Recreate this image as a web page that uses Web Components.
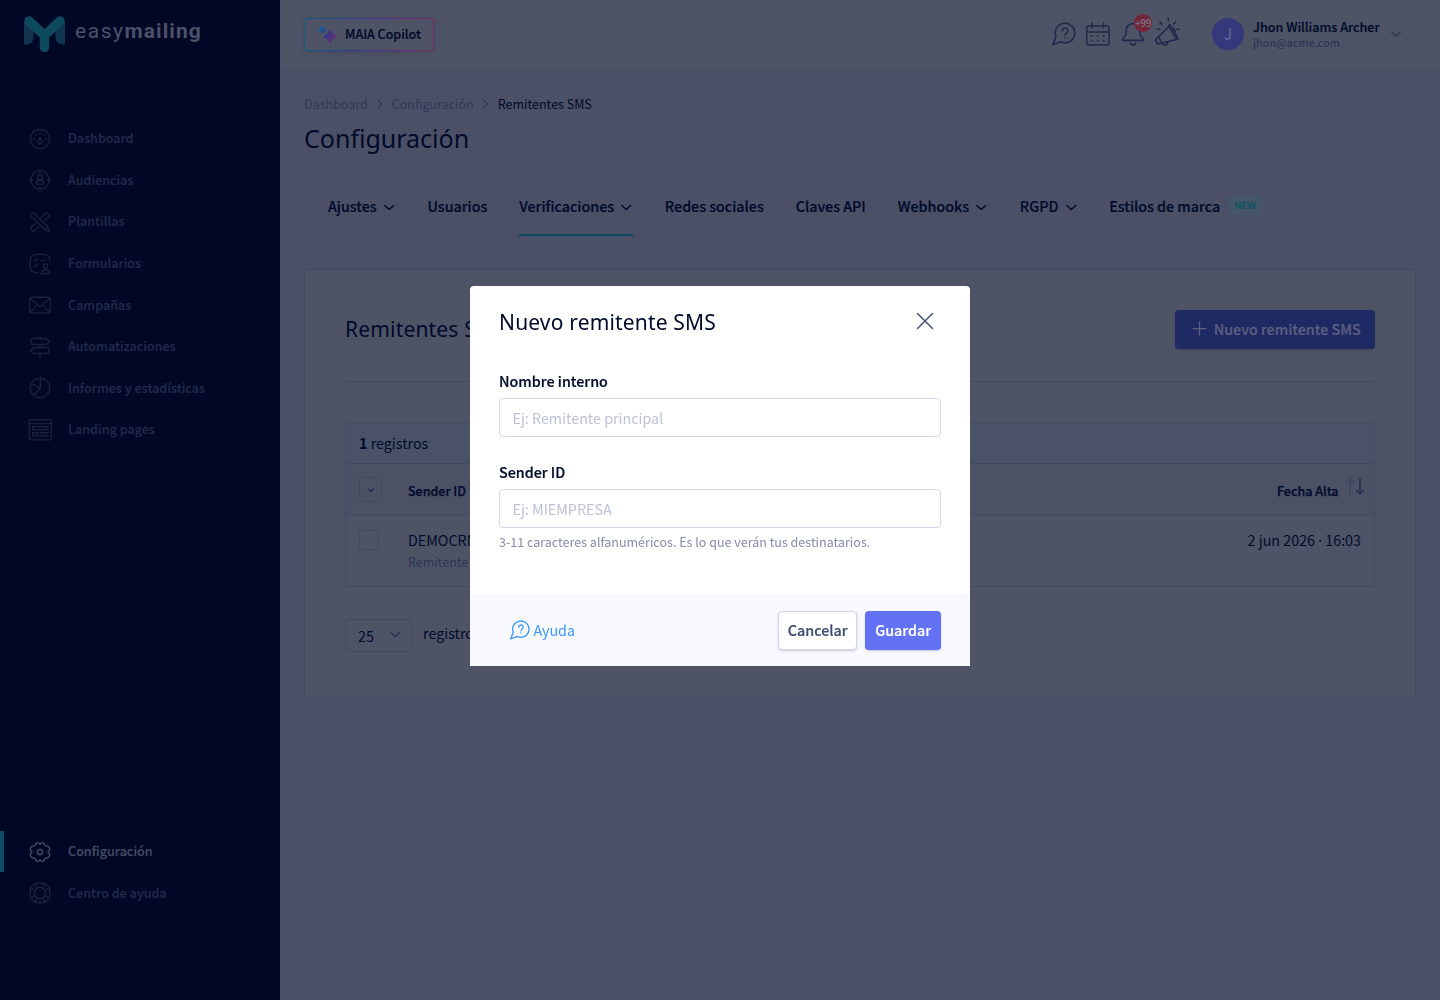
<!DOCTYPE html>
<html lang="es">
<head>
<meta charset="utf-8">
<title>Remitentes SMS</title>
<style>
  :root {
    --font-body: "Noto Sans CJK SC", "Noto Sans", sans-serif;
    --font-display: "Noto Sans", sans-serif;
    --side: #000825;
    --ink: #000b2b;
    --surface: #4e5366;
    --page: #4b5066;
    --strip: #495266;
    --line: #424b62;
    --muted: #2d3552;
    --teal: #0d4b5e;
    --indigo: #1f2964;
  }
  html, body { margin: 0; height: 100%; }
  body { font-family: var(--font-body); color: var(--ink); background: var(--page); overflow: hidden; }
</style>
</head>
<body>
<app-shell>
  <side-nav slot="side"></side-nav>
  <top-bar slot="top"></top-bar>
  <page-head></page-head>
  <tab-bar>
    <tab-item menu>Ajustes</tab-item>
    <tab-item>Usuarios</tab-item>
    <tab-item menu active>Verificaciones</tab-item>
    <tab-item>Redes sociales</tab-item>
    <tab-item>Claves API</tab-item>
    <tab-item menu>Webhooks</tab-item>
    <tab-item menu>RGPD</tab-item>
    <tab-item badge="NEW">Estilos de marca</tab-item>
  </tab-bar>
  <panel-card heading="Remitentes SMS" action="Nuevo remitente SMS">
    <records-table></records-table>
    <page-size></page-size>
  </panel-card>
</app-shell>
<modal-dialog heading="Nuevo remitente SMS">
  <form-field label="Nombre interno" placeholder="Ej: Remitente principal"></form-field>
  <form-field label="Sender ID" placeholder="Ej: MIEMPRESA" hint="3-11 caracteres alfanuméricos. Es lo que verán tus destinatarios."></form-field>
  <a slot="help"><ui-icon name="help" size="20" stroke="1.6"></ui-icon><span>Ayuda</span></a>
  <ui-button slot="actions" variant="plain">Cancelar</ui-button>
  <ui-button slot="actions" variant="primary">Guardar</ui-button>
</modal-dialog>

<script>
// 24x24 outline icons, drawn with currentColor
const ICONS = {
  dashboard: '<circle cx="12" cy="12" r="10.6"/><path d="M12 10.5c-1.3 2-2 3.3-2 4.5a2 2 0 0 0 4 0c0-1.2-.7-2.5-2-4.5Z"/><path d="M12 5.3v.9M7.5 7.2l.7.8M16.5 7.2l-.7.8M5.3 12h1M17.7 12h1"/>',
  audience: '<circle cx="12" cy="12" r="10"/><path d="M12 .5v3M12 20.5v3M.5 12h3M20.5 12h3"/><circle cx="12" cy="9" r="2.7"/><path d="M7.8 16.5c0-2.5 1.7-4 4.2-4s4.2 1.5 4.2 4Z"/>',
  templates: '<path d="M10 7 5.8 2.5c-1.7-1.6-5 1-3.3 3.3L7 10M7 10l10 10.5 5.5 2-2-5.5L10 7"/><path d="M13.5 7 18 2.3c.6-.6 1.200-.6 1.800 0l2 2c.6.6.6 1.200 0 1.800L17 10.500M10.500 17l-4.500 4.700c-.6.6-1.200.6-1.800 0l-2-2c-.6-.6-.6-1.200 0-1.800L7 13.500M20.300 17.200l-3 3"/>',
  forms: '<path d="M9.5 21.5H7a5.5 5.5 0 0 1-5.500-5.500V7A5.500 5.500 0 0 1 7 1.500h10A5.500 5.500 0 0 1 22.500 7v2.500"/><path d="m5.500 7.500 1.500 1.300 2.500-2.500M5.500 13.500 7 14.800l2.500-2.500M12.500 8h5"/><circle cx="18" cy="14.200" r="2.400"/><path d="M13.500 22.800c0-3 1.500-4.200 4.500-4.200s4.500 1.200 4.500 4.200Z"/>',
  mail: '<rect x=".7" y="3.600" width="22.300" height="17" rx="2"/><path d="m1.500 5 8.300 7.200c1.400 1.200 2.800 1.200 4.200 0L22.300 5M1.500 19.800 9 12M22.300 19.800 15 12"/>',
  signpost: '<path d="M12 .5v2.200M12 9.300v3.200M12 19v4.500M3.500 2.700H19l3.300 3.300L19 9.300H3.500a1 1 0 0 1-1-1V3.700a1 1 0 0 1 1-1ZM20.500 12.500H5L1.700 15.800 5 19h15.500a1 1 0 0 0 1-1v-4.500a1 1 0 0 0-1-1Z"/>',
  chart: '<circle cx="12" cy="12" r="10.600"/><path d="M12.500 1.500v10.500L5.300 20M12.500 12 2.700 7.500"/>',
  landing: '<rect x=".3" y=".8" width="23.900" height="22" rx="1.500"/><path d="M.5 5h23.500M4 8.500h16.500v3.200H4ZM4 15h5.500v3.500H4ZM12 15h9M12 18.500h9"/>',
  gear: '<circle cx="12" cy="12" r="2.900"/><path d="M9.300 1.800c1.700-.6 1.500 1.600 2.700 1.600s1-2.200 2.700-1.600c2.300.7 1.700 1.200 2.300 2.600.6 1.200 2.300.6 3.500 1.200 1.500 1 2.300 2.800 2.100 4-.2 1.300-1.800 1.200-1.800 2.400s1.600 1.100 1.800 2.400c.2 1.200-.6 3-2.100 4-1.200.6-2.900 0-3.500 1.200-.6 1.400 0 1.900-2.300 2.600-1.700.6-1.500-1.600-2.700-1.600s-1 2.200-2.700 1.600C7 21.500 7.600 21 7 19.600c-.6-1.200-2.300-.6-3.500-1.200-1.500-1-2.300-2.800-2.100-4 .2-1.300 1.800-1.200 1.800-2.400S1.600 10.900 1.400 9.600c-.2-1.200.6-3 2.100-4C4.700 5 6.400 5.600 7 4.400c.6-1.400 0-1.900 2.300-2.600Z"/>',
  lifebuoy: '<rect x="1.300" y="1.300" width="21.400" height="21.400" rx="8.500"/><circle cx="12" cy="12" r="6.300"/><path d="m6.500 2.200 2.500 4.200M2.200 6.500l4.200 2.500M17.500 2.200 15 6.400M21.800 6.500 17.600 9M6.500 21.800 9 17.600M2.200 17.500 6.400 15M17.500 21.800 15 17.600M21.800 17.500 17.600 15"/>',
  help: '<path d="M.8 22.600 3.900 14.600A9.800 9.800 0 1 1 8.700 19.800Z"/><path d="M10.400 8.700a2.700 2.700 0 1 1 3.900 2.400c-.9.500-1.200.9-1.200 1.900M13.100 15.500v.2"/>',
  calendar: '<rect x=".8" y="4" width="22.200" height="19" rx="1.600"/><path d="M.8 10H23M6.300.8V6M17.500.8V6"/><path d="M5.500 14h.2M11.700 14h.2M17.700 14h.2M5.500 18.600h.2M11.700 18.600h.2M17.700 18.600h.2" stroke-width="1.900"/>',
  bell: '<path d="M13 1.500a6.800 6.800 0 0 1 6.800 6.800c0 5 .8 6.200 3.200 8.200.9.800.5 1.900-.5 1.900h-19c-1 0-1.400-1.100-.5-1.900 2.400-2 3.200-3.200 3.200-8.200A6.800 6.800 0 0 1 13 1.500ZM10.300 21.200c.8 2.200 4.600 2.200 5.400 0"/>',
  megaphone: '<path d="M15.300 4.300 3.500 15.500l-1.800 2a1 1 0 0 0-.1 1.200l1.600 2.800a1 1 0 0 0 1.100.5L7.500 21.200 22 17.500M4.500 15l3.500 6"/><path d="m14.500 3.600 1.500-.9 8 14-1.500.9ZM8.800 21.200c.9 3 4.700 2.400 4.700-1.300M18.200 5.800c2.300.2 3.600 2.900 2.300 4.800"/><path d="M3.300 7.300h2.500M6 0l1.800 2.300M14.300-4v2.700M19.700 2l2-2M22.800 7.300h2.400"/>',
  chevron: '<path d="m3.500 8.500 8.500 8 8.500-8"/>',
  next: '<path d="m8 4 7.500 8L8 20"/>',
  plus: '<path d="M12 1.500v21M1.500 12h21"/>',
  close: '<path d="m2 2 20 20M22 2 2 22"/>'
};

// <ui-icon name="mail" size="22" stroke="1.2">
class UiIcon extends HTMLElement {
  connectedCallback() {
    const size = this.getAttribute('size') || 22;
    const stroke = this.getAttribute('stroke') || 1.5;
    this.attachShadow({ mode: 'open' }).innerHTML = `
      <style>
        :host { display: inline-flex; flex: none; width: ${size}px; height: ${size}px; }
        svg { overflow: visible; }
      </style>
      <svg width="${size}" height="${size}" viewBox="0 0 24 24" fill="none" stroke="currentColor"
        stroke-width="${stroke}" stroke-linecap="round" stroke-linejoin="round">${ICONS[this.getAttribute('name')]}</svg>`;
  }
}

class AppShell extends HTMLElement {
  connectedCallback() {
    this.attachShadow({ mode: 'open' }).innerHTML = `
      <style>
        :host { display: grid; grid-template-columns: 280px 1fr; height: 100vh; }
        .main { display: flex; flex-direction: column; min-width: 0; }
        .content { padding: 24px 24px 0; }
      </style>
      <slot name="side"></slot>
      <div class="main">
        <slot name="top"></slot>
        <div class="content"><slot></slot></div>
      </div>`;
  }
}

class SideNav extends HTMLElement {
  connectedCallback() {
    const items = [
      ['dashboard', 'Dashboard'],
      ['audience', 'Audiencias'],
      ['templates', 'Plantillas'],
      ['forms', 'Formularios'],
      ['mail', 'Campañas'],
      ['signpost', 'Automatizaciones'],
      ['chart', 'Informes y estadísticas'],
      ['landing', 'Landing pages'],
    ];
    const link = ([icon, label], active) => `
      <a class="${active ? 'active' : ''}"><ui-icon name="${icon}" size="22"></ui-icon><span>${label}</span></a>`;

    this.attachShadow({ mode: 'open' }).innerHTML = `
      <style>
        :host {
          display: flex; flex-direction: column; box-sizing: border-box;
          background: var(--side); padding: 16px 0 86px;
        }
        .brand { display: flex; gap: 10px; height: 36px; padding-left: 24px; margin-bottom: 66px; color: #4b5168; }
        .brand .word { font: 400 21px/30px Roboto, sans-serif; letter-spacing: 1.55px; }
        .brand b { font-weight: 700; letter-spacing: 1.05px; }
        nav { display: flex; flex-direction: column; }
        nav.bottom { margin-top: auto; }
        a {
          display: flex; align-items: center; gap: 17px; height: 41.6px; padding-left: 25px;
          border-left: 4px solid transparent; box-sizing: border-box;
          font-size: 12.5px; font-weight: 500; letter-spacing: 0.05px; line-height: 20px; color: #222a4b;
          -webkit-text-stroke: 0.2px;
        }
        a ui-icon { color: #19213f; }
        a span { margin-top: -1px; }
        .bottom a + a span { margin-top: 0; }
        a.active, a.active ui-icon { color: #454c64; }
        a.active { border-color: var(--teal); }
      </style>
      <div class="brand">
        <svg width="41" height="36" viewBox="0 0 41 36">
          <path d="M0 5 9.500 14v7.500c0 4-3 7-7 7H0ZM41 5l-9.500 9v7.500c0 4 3 7 7 7H41Z" fill="#11344f"/>
          <path d="M5 5 20.500 19.500 36 5M20.500 19.500V31.500" fill="none" stroke="#0e4a5d" stroke-width="9.400" stroke-linecap="round" stroke-linejoin="round"/>
        </svg>
        <span class="word">easy<b>mailing</b></span>
      </div>
      <nav>${items.map((it) => link(it)).join('')}</nav>
      <nav class="bottom">
        ${link(['gear', 'Configuración'], true)}
        ${link(['lifebuoy', 'Centro de ayuda'])}
      </nav>`;
  }
}

class TopBar extends HTMLElement {
  connectedCallback() {
    this.attachShadow({ mode: 'open' }).innerHTML = `
      <style>
        :host {
          display: flex; align-items: center; box-sizing: border-box; height: 70px; padding: 0 38px 1px 24px;
          background: var(--surface); border-bottom: 1px solid #454e65;
        }
        .copilot {
          display: flex; align-items: center; gap: 8px; box-sizing: border-box; width: 130px; height: 33px; padding-left: 12px;
          margin-top: 1px; border: 1px solid transparent; border-radius: 4px;
          background: linear-gradient(var(--surface), var(--surface)) padding-box,
            linear-gradient(90deg, #0b6480, #30399a 35%, #55308a 65%, #7d2a62) border-box;
          box-shadow: 0 1px 5px rgba(0, 8, 37, 0.16);
          font-size: 12.5px; font-weight: 500; line-height: 20px; -webkit-text-stroke: 0.2px;
        }
        .copilot span { margin-top: -2px; }
        .tools { display: flex; align-items: center; gap: 10px; margin-left: auto; color: #202a4a; }
        .bell { position: relative; display: flex; }
        .bell i {
          position: absolute; left: 14px; top: -8px; width: 18px; height: 18px; border-radius: 50%;
          background: #742437; color: #767a8a; text-align: center;
          font: 500 10px/18px var(--font-body); letter-spacing: -0.3px;
        }
        .avatar {
          width: 32px; height: 32px; border-radius: 50%; margin: 0 9px 0 34px;
          background: #35397c; color: #5c6090; text-align: center; font-size: 16px; line-height: 31px; font-weight: 500;
        }
        .who { display: flex; flex-direction: column; width: 127px; white-space: nowrap; -webkit-text-stroke: 0.2px; }
        .who b { font-size: 12.6px; font-weight: 500; line-height: 16px; }
        .who small { font-size: 10.8px; font-weight: 500; line-height: 14px; color: var(--muted); -webkit-text-stroke: 0; }
        .caret { color: var(--muted); margin-left: 10px; }
      </style>
      <div class="copilot">
        <svg width="20" height="20" viewBox="0 0 20 20">
          <defs><linearGradient id="g" gradientUnits="userSpaceOnUse" x1="1" y1="1" x2="19" y2="18">
            <stop offset="0" stop-color="#10688c"/><stop offset=".55" stop-color="#3a3585"/><stop offset="1" stop-color="#7b2a6c"/>
          </linearGradient></defs>
          <path fill="url(#g)" stroke="url(#g)" stroke-width="1.400" stroke-linejoin="round" d="M5.300.9Q6.200 3.700 9 4.600 6.200 5.500 5.300 8.300 4.400 5.500 1.600 4.600 4.400 3.700 5.300.9ZM13 5.600Q14.600 10.100 19 11.700 14.600 13.300 13 17.900 11.400 13.300 7 11.700 11.400 10.100 13 5.600Z"/>
        </svg>
        <span>MAIA Copilot</span>
      </div>
      <div class="tools">
        <ui-icon name="help" size="24" stroke="1.6"></ui-icon>
        <ui-icon name="calendar" size="24" stroke="1.5"></ui-icon>
        <span class="bell"><ui-icon name="bell" size="24" stroke="1.6"></ui-icon><i>+99</i></span>
        <ui-icon name="megaphone" size="24" stroke="1.6"></ui-icon>
      </div>
      <div class="avatar">J</div>
      <div class="who"><b>Jhon Williams Archer</b><small>jhon@acme.com</small></div>
      <ui-icon class="caret" name="chevron" size="12" stroke="2.600"></ui-icon>`;
  }
}

class PageHead extends HTMLElement {
  connectedCallback() {
    this.attachShadow({ mode: 'open' }).innerHTML = `
      <style>
        :host { display: block; }
        .trail { display: flex; align-items: center; gap: 6px; font-size: 12.53px; line-height: 20px; color: #313956; }
        .trail b { font-weight: 400; color: var(--ink); }
        h1 { margin: 7px 0 0; font: 400 25px/34px var(--font-display); }
      </style>
      <div class="trail">
        <span>Dashboard</span><ui-icon name="next" size="12" stroke="2.600"></ui-icon>
        <span>Configuración</span><ui-icon name="next" size="12" stroke="2.600"></ui-icon>
        <b>Remitentes SMS</b>
      </div>
      <h1>Configuración</h1>`;
  }
}

class TabBar extends HTMLElement {
  connectedCallback() {
    this.attachShadow({ mode: 'open' }).innerHTML = `
      <style>
        :host { display: flex; gap: 32px; height: 60px; margin-top: 21px; padding: 0 24px; border-bottom: 1px solid var(--line); }
      </style>
      <slot></slot>`;
  }
}

class TabItem extends HTMLElement {
  connectedCallback() {
    const badge = this.getAttribute('badge');
    this.attachShadow({ mode: 'open' }).innerHTML = `
      <style>
        :host {
          display: flex; align-items: center; box-sizing: border-box; height: 60px; padding-top: 2px; white-space: nowrap;
          font-size: 14.28px; font-weight: 500; line-height: 20px; border-bottom: 2px solid transparent;
          -webkit-text-stroke: 0.2px;
        }
        :host([active]) { border-color: var(--teal); }
        ui-icon { margin: 2px 0 0 6.3px; }
        i {
          margin: -2px 0 0 8.500px; padding: 0 6px; height: 20px; border-radius: 3px; background: #455668;
          color: #0a5460; font-style: normal; font-size: 9.5px; font-weight: 500; line-height: 20px;
        }
      </style>
      <slot></slot>
      ${this.hasAttribute('menu') ? '<ui-icon name="chevron" size="12.500" stroke="2.800"></ui-icon>' : ''}
      ${badge ? `<i>${badge}</i>` : ''}`;
  }
}

class UiButton extends HTMLElement {
  connectedCallback() {
    this.attachShadow({ mode: 'open' }).innerHTML = `
      <style>
        :host {
          display: inline-flex; align-items: center; justify-content: center; box-sizing: border-box;
          height: 39px; padding: 0 9px; border-radius: 4px; border: 1px solid transparent; white-space: nowrap;
          font-size: 14.3px; font-weight: 500; line-height: 20px; box-shadow: 0 1px 2px rgba(60, 70, 110, 0.25);
          -webkit-text-stroke: 0.2px;
        }
        :host([variant="plain"]) { background: #fff; border-color: #d3d6e6; color: #424b70; padding: 0 8.5px; }
        :host([variant="primary"]) { background: #6371f4; color: #fff; }
        :host([variant="dimmed"]) { background: var(--indigo); color: #5b6080; padding: 0 13px 2px 15.5px; box-shadow: 0 1px 2px rgba(0, 8, 37, 0.2); }
        ui-icon { margin-right: 7px; }
      </style>
      ${this.hasAttribute('icon') ? `<ui-icon name="${this.getAttribute('icon')}" size="15" stroke="2"></ui-icon>` : ''}
      <slot></slot>`;
  }
}

class PanelCard extends HTMLElement {
  connectedCallback() {
    this.attachShadow({ mode: 'open' }).innerHTML = `
      <style>
        :host {
          display: block; box-sizing: border-box; height: 429px; margin-top: 32px; padding: 40px;
          background: var(--surface); border: 1px solid var(--line); border-radius: 4px;
        }
        header {
          display: flex; justify-content: space-between; align-items: center; height: 39px;
          padding-bottom: 32px; margin-bottom: 40px; border-bottom: 1px solid var(--line);
        }
        h2 { margin: -2px 0 0; font: 400 21px/28px var(--font-display); letter-spacing: 0.17px; white-space: nowrap; }
        ui-button { width: 200px; }
      </style>
      <header>
        <h2>${this.getAttribute('heading')}</h2>
        <ui-button variant="dimmed" icon="plus">${this.getAttribute('action')}</ui-button>
      </header>
      <slot></slot>`;
  }
}

class RecordsTable extends HTMLElement {
  connectedCallback() {
    this.attachShadow({ mode: 'open' }).innerHTML = `
      <style>
        :host { display: block; border: 1px solid var(--line); border-radius: 3px 3px 0 0; font-size: 14.3px; line-height: 20px; }
        .count { height: 40px; padding-left: 13px; background: var(--strip); line-height: 40px; }
        .count b { font-weight: 700; }
        .row { display: grid; grid-template-columns: 49px 1fr auto; border-top: 1px solid var(--line); padding: 0 13px; box-sizing: border-box; }
        .head { height: 52px; align-items: center; padding-right: 10px; background: #4c5166; font-size: 12.5px; font-weight: 500; -webkit-text-stroke: 0.25px; }
        .head span:not(.pick) { padding-top: 2px; }
        .body { height: 71px; padding-top: 14px; }
        .pick {
          display: flex; align-items: center; justify-content: center; box-sizing: border-box;
          width: 23px; height: 25px; border: 1px solid var(--line); border-radius: 3px; color: #1d2545;
        }
        .check { width: 20px; height: 20px; }
        .sort { display: flex; align-items: center; gap: 6.5px; }
        .sort svg { margin-top: -8px; }
        .name { display: flex; flex-direction: column; }
        .dot { font-family: "Noto Sans", sans-serif; }
        small { font-size: 12.5px; line-height: 24px; color: var(--muted); }
      </style>
      <div class="count"><b>1</b> registros</div>
      <div class="row head">
        <span class="pick"><ui-icon name="chevron" size="8" stroke="3.600"></ui-icon></span>
        <span>Sender ID</span>
        <span class="sort">Fecha Alta
          <svg width="19" height="17" viewBox="0 0 19 17" fill="none" stroke-width="1.500" stroke-linecap="round" stroke-linejoin="round">
            <path d="M5 16V1M1.500 4.500 5 1l3.500 3.500" stroke="#3d4663"/>
            <path d="M15 1v15M11.500 12.500 15 16l3.500-3.500" stroke="#252c49"/>
          </svg>
        </span>
      </div>
      <div class="row body">
        <span class="pick check"></span>
        <span class="name">DEMOCRM<small>Remitente principal</small></span>
        <span>2 jun 2026 <span class="dot">·</span> 16:03</span>
      </div>`;
  }
}

class PageSize extends HTMLElement {
  connectedCallback() {
    this.attachShadow({ mode: 'open' }).innerHTML = `
      <style>
        :host { display: flex; gap: 11px; margin-top: 32px; font-size: 14.3px; line-height: 28px; }
        .select {
          display: flex; align-items: center; justify-content: space-between; box-sizing: border-box;
          width: 67px; height: 33px; padding: 0 10px 0 12px; border: 1px solid var(--line); border-radius: 4px;
        }
        ui-icon { color: #2e3653; margin-top: -3px; }
      </style>
      <span class="select">25<ui-icon name="chevron" size="12.500" stroke="3"></ui-icon></span>
      <span>registros</span>`;
  }
}

class ModalDialog extends HTMLElement {
  connectedCallback() {
    this.attachShadow({ mode: 'open' }).innerHTML = `
      <style>
        :host { position: fixed; inset: 0; display: grid; justify-content: center; align-content: start; padding-top: 286px; }
        .box { width: 500px; height: 380px; display: flex; flex-direction: column; background: #fff; border-radius: 4px 4px 0 0; overflow: hidden; }
        header { display: flex; justify-content: space-between; align-items: center; height: 72px; padding: 0 36px 0 29px; }
        h2 { margin: 0; font: 400 21px/28px var(--font-display); letter-spacing: 0.17px; }
        header ui-icon { color: #4a5278; margin-top: -2px; }
        .body { flex: 1; display: flex; flex-direction: column; gap: 24.6px; padding: 13px 29px 0; }
        footer { display: flex; align-items: center; gap: 8px; height: 72px; padding: 0 29px 0 40px; background: #f8f9ff; }
        .help { margin-right: auto; }
        ::slotted(a) { display: flex; align-items: center; gap: 3.4px; font-size: 14.3px; line-height: 20px; color: #3b99fa; }
      </style>
      <div class="box">
        <header><h2>${this.getAttribute('heading')}</h2><ui-icon name="close" size="18" stroke="2"></ui-icon></header>
        <div class="body"><slot></slot></div>
        <footer><span class="help"><slot name="help"></slot></span><slot name="actions"></slot></footer>
      </div>`;
  }
}

class FormField extends HTMLElement {
  connectedCallback() {
    const hint = this.getAttribute('hint');
    this.attachShadow({ mode: 'open' }).innerHTML = `
      <style>
        :host { display: flex; flex-direction: column; }
        label { font-size: 14.3px; font-weight: 500; line-height: 20px; margin-bottom: 7px; -webkit-text-stroke: 0.2px; }
        input {
          box-sizing: border-box; width: 100%; height: 39px; padding: 0 12.5px; border: 1px solid #d3d6e9; border-radius: 4px;
          background: #fff; font: 400 14.3px/20px var(--font-body); color: var(--ink);
        }
        input::placeholder { color: #bcc1d8; opacity: 1; }
        small { margin-top: 4.4px; font-size: 12.53px; line-height: 20px; color: #868da9; }
      </style>
      <label>${this.getAttribute('label')}</label>
      <input placeholder="${this.getAttribute('placeholder')}">
      ${hint ? `<small>${hint}</small>` : ''}`;
  }
}

customElements.define('ui-icon', UiIcon);
customElements.define('ui-button', UiButton);
customElements.define('app-shell', AppShell);
customElements.define('side-nav', SideNav);
customElements.define('top-bar', TopBar);
customElements.define('page-head', PageHead);
customElements.define('tab-bar', TabBar);
customElements.define('tab-item', TabItem);
customElements.define('panel-card', PanelCard);
customElements.define('records-table', RecordsTable);
customElements.define('page-size', PageSize);
customElements.define('form-field', FormField);
customElements.define('modal-dialog', ModalDialog);
</script>
</body>
</html>
